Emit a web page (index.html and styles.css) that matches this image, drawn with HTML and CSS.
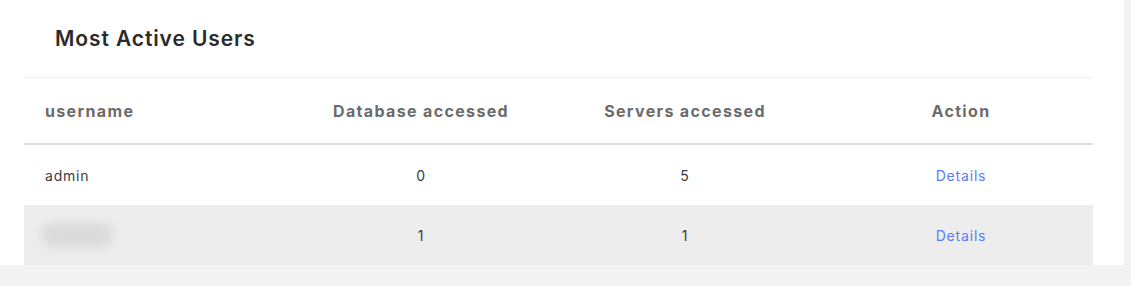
FILE: index.html
```html
<!DOCTYPE html>
<html>
<head>
<meta name="viewport" content="width=device-width, initial-scale=1">
<link rel="stylesheet" href="styles.css">
</head>
<body>
<div class="card">
  <div class="card-title">Most Active Users</div>
  <table class="users">
    <col class="c-user" /><col class="c-db" /><col class="c-srv" /><col class="c-act" />
    <thead>
      <tr>
        <th class="left">username</th>
        <th>Database accessed</th>
        <th>Servers accessed</th>
        <th>Action</th>
      </tr>
    </thead>
    <tbody>
      <tr>
        <td class="left">admin</td>
        <td>0</td>
        <td>5</td>
        <td><a class="details" href="#">Details</a></td>
      </tr>
      <tr class="alt">
        <td class="left"><span class="hidden-name"></span></td>
        <td>1</td>
        <td>1</td>
        <td><a class="details" href="#">Details</a></td>
      </tr>
    </tbody>
  </table>
</div>
</body>
</html>
```

FILE: styles.css
```css
body {
  margin: 0;
  background: #f2f2f2;
  font-family: Inter, "Noto Sans", sans-serif;
}

/* white panel, table sits inside with a gutter */
.card {
  width: 1124px;
  height: 265px;
  box-sizing: border-box;
  background: #fff;
  padding: 0 31px 0 24px;
}

.card-title {
  height: 78px;
  box-sizing: border-box;
  padding: 26px 0 0 31px;
  font-size: 21px;
  font-weight: 600;
  letter-spacing: 0.9px;
  color: #2b2b2b;
  border-bottom: 1px solid #f2f2f2;
}

.users {
  width: 100%;
  border-collapse: collapse;
  table-layout: fixed;
}

.c-user { width: 277px; }
.c-db { width: 240px; }
.c-srv { width: 288px; }
.c-act { width: 264px; }

.users th {
  height: 65px;
  font-size: 16px;
  font-weight: 700;
  letter-spacing: 1.35px;
  color: #6b6b6b;
  text-align: center;
  border-bottom: 2px solid #dedede;
  padding: 0;
}

.users td {
  height: 60px;
  font-size: 14px;
  letter-spacing: 0.8px;
  color: #3c3c3c;
  text-align: center;
  padding: 0;
}

.users .left {
  text-align: left;
  padding-left: 21px;
}

.users tr.alt td {
  background: #ededed;
}

.details {
  color: #5c7cfa;
  text-decoration: none;
}

/* blurred placeholder for a masked user name */
.hidden-name {
  display: inline-block;
  width: 72px;
  height: 24px;
  margin-left: -4px;
  vertical-align: middle;
  background: #dadada;
  border-radius: 12px;
  filter: blur(5px);
}
```
